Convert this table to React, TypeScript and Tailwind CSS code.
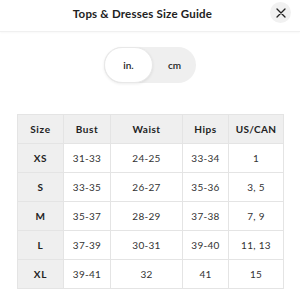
import { useState } from "react";

type Row = { size: string; bust: string; waist: string; hips: string; us: string };

const rows: Row[] = [
    { size: "XS", bust: "31-33", waist: "24-25", hips: "33-34", us: "1" },
    { size: "S", bust: "33-35", waist: "26-27", hips: "35-36", us: "3, 5" },
    { size: "M", bust: "35-37", waist: "28-29", hips: "37-38", us: "7, 9" },
    { size: "L", bust: "37-39", waist: "30-31", hips: "39-40", us: "11, 13" },
    { size: "XL", bust: "39-41", waist: "32", hips: "41", us: "15" },
];

export default function App() {
    const [unit, setUnit] = useState<"in" | "cm">("in");

    return (
        <div className="w-[300px] h-[300px] bg-white text-[#222] overflow-hidden" style={{ fontFamily: "Lato, 'Open Sans', sans-serif" }}>
            {/* header */}
            <div className="relative h-[32px] flex items-start justify-center border-b border-[#f0f0f0] shadow-[0_1px_2px_rgba(0,0,0,0.03)]">
                <h1 className="text-[11.5px] font-bold tracking-[0.2px] mt-[5px] mr-[15px]">Tops &amp; Dresses Size Guide</h1>
                <button className="absolute right-[9px] top-[2px] w-[21px] h-[21px] rounded-full bg-[#f1f1f1] flex items-center justify-center">
                    <svg width="10" height="10" viewBox="0 0 10 10" stroke="#222" strokeWidth="1.3" strokeLinecap="round">
                        <path d="M1 1 L9 9 M9 1 L1 9" />
                    </svg>
                </button>
            </div>

            {/* unit toggle */}
            <div className="flex justify-center mt-[15px]">
                <div className="flex w-[92px] h-[36px] rounded-full bg-[#efefef]">
                    <button
                        onClick={() => setUnit("in")}
                        className={`w-[49px] h-full rounded-full text-[10px] font-semibold ${unit === "in" ? "bg-white border border-[#e8e8e8] shadow-[0_1px_3px_rgba(0,0,0,0.08)]" : ""}`}
                    >
                        in.
                    </button>
                    <button
                        onClick={() => setUnit("cm")}
                        className={`flex-1 h-full rounded-full text-[10px] font-semibold ${unit === "cm" ? "bg-white border border-[#e8e8e8] shadow-[0_1px_3px_rgba(0,0,0,0.08)]" : ""}`}
                    >
                        cm
                    </button>
                </div>
            </div>

            {/* table */}
            <div className="ml-[17px] mt-[31px]">
                <table className="border-collapse text-[10px] text-center">
                    <thead>
                        <tr className="bg-[#efefef] h-[29px]">
                            <th className="w-[46px] font-bold tracking-[0.7px] border border-[#e4e4e4]">Size</th>
                            <th className="w-[47px] font-bold tracking-[0.5px] border border-[#e4e4e4]">Bust</th>
                            <th className="w-[72px] font-bold tracking-[0.5px] border border-[#e4e4e4]">Waist</th>
                            <th className="w-[46px] font-bold tracking-[0.5px] border border-[#e4e4e4]">Hips</th>
                            <th className="w-[55px] font-bold tracking-[0.3px] border border-[#e4e4e4]">US/CAN</th>
                        </tr>
                    </thead>
                    <tbody>
                        {rows.map((r) => (
                            <tr key={r.size} className="h-[29px]">
                                <td className="bg-[#efefef] font-bold tracking-[0.7px] border border-[#e4e4e4]">{r.size}</td>
                                <td className="border border-[#e4e4e4] text-[#333] tracking-[0.3px]">{r.bust}</td>
                                <td className="border border-[#e4e4e4] text-[#333] tracking-[0.3px]">{r.waist}</td>
                                <td className="border border-[#e4e4e4] text-[#333] tracking-[0.3px]">{r.hips}</td>
                                <td className="border border-[#e4e4e4] text-[#333] tracking-[0.3px]">{r.us}</td>
                            </tr>
                        ))}
                    </tbody>
                </table>
            </div>
        </div>
    );
}
